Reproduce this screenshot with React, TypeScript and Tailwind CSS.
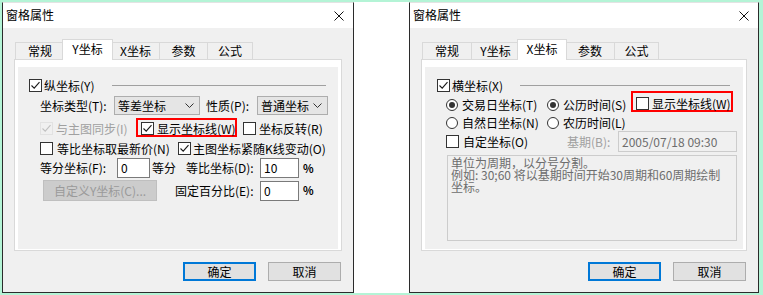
import React from 'react';

const font = { fontFamily: '"Noto Sans CJK SC", "Noto Sans", sans-serif' };

const CheckMark = ({ color = '#1a1a1a' }: { color?: string }) => (
  <svg width="11" height="11" viewBox="0 0 11 11" className="block">
    <path d="M1.5 5.5 L4.2 8.2 L9.5 2.2" fill="none" stroke={color} strokeWidth="1.1" />
  </svg>
);

const Check = ({ checked = false, disabled = false }: { checked?: boolean; disabled?: boolean }) => (
  <span
    className={`w-[13px] h-[13px] shrink-0 flex items-center justify-center border ${
      disabled ? 'border-[#e2e2e2] bg-[#f0f0f0]' : 'border-[#333] bg-white'
    }`}
  >
    {checked && <CheckMark color={disabled ? '#c0c0c0' : '#1a1a1a'} />}
  </span>
);

const Radio = ({ on = false }: { on?: boolean }) => (
  <span className="w-[12px] h-[12px] shrink-0 rounded-full border border-[#333] bg-white flex items-center justify-center">
    {on && <span className="w-[6px] h-[6px] rounded-full bg-[#333]" />}
  </span>
);

const Chevron = () => (
  <svg width="9" height="5" viewBox="0 0 9 5" className="block">
    <path d="M0.5 0.5 L4.5 4.5 L8.5 0.5" fill="none" stroke="#333" strokeWidth="1" />
  </svg>
);

const Select = ({ value, w }: { value: string; w: string }) => (
  <div className={`${w} h-[19px] border border-[#adadad] bg-[#e5e5e5] flex items-center justify-between pl-[3px] pr-[5px]`}>
    <span>{value}</span>
    <Chevron />
  </div>
);

const Input = ({ value, w, h = 'h-[20px]', disabled = false }: { value: string; w: string; h?: string; disabled?: boolean }) => (
  <div
    className={`${w} ${h} border flex items-center pl-[3px] ${
      disabled ? 'border-[#cccccc] bg-[#f0f0f0] text-[#6d6d6d]' : 'border-[#7a7a7a] bg-white'
    }`}
  >
    {value}
  </div>
);

const Btn = ({ label, primary = false }: { label: string; primary?: boolean }) => (
  <div
    className={`w-[73px] h-[19px] bg-[#e1e1e1] flex items-center justify-center ${
      primary ? 'border-2 border-[#0078d7]' : 'border border-[#adadad]'
    }`}
  >
    {label}
  </div>
);

const TitleBar = () => (
  <div className="h-[25px] bg-white flex items-center justify-between pl-[3px] pr-[9px]">
    <span className="text-[12px] -mt-[1px]">窗格属性</span>
    <svg width="10" height="10" viewBox="0 0 10 10" className="block">
      <path d="M0.5 0.5 L9.5 9.5 M9.5 0.5 L0.5 9.5" stroke="#111" strokeWidth="1" />
    </svg>
  </div>
);

const Tabs = ({ active, widths }: { active: number; widths: number[] }) => {
  const names = ['常规', 'Y坐标', 'X坐标', '参数', '公式'];
  const w = ['w-[49px]', 'w-[47px]', 'w-[48px]', 'w-[48px]', 'w-[46px]'];
  const wr = ['w-[49px]', 'w-[48px]', 'w-[46px]', 'w-[49px]', 'w-[45px]'];
  const wsel = ['w-[53px]', 'w-[51px]', 'w-[50px]', 'w-[53px]', 'w-[49px]'];
  const list = widths[0] === 0 ? w : wr;
  return (
    <div className="mt-[11px] h-[20px] pl-[12px] flex items-end">
      {names.map((n, i) =>
        i === active ? (
          <div
            key={n}
            className={`${wsel[i]} relative z-10 -mx-[2px] h-[21px] -mb-[1px] bg-white border-t border-x border-[#d9d9d9] flex items-center justify-center pb-[2px]`}
          >
            {n}
          </div>
        ) : (
          <div
            key={n}
            className={`${list[i]} h-[17px] bg-[#f0f0f0] border-t border-l border-[#d9d9d9] ${
              i === names.length - 1 ? 'border-r' : ''
            } flex items-center justify-center`}
          >
            {n}
          </div>
        )
      )}
    </div>
  );
};

const Dialog = ({ w, active, children }: { w: string; active: number; children: React.ReactNode }) => (
  <div className={`${w} h-[291px] border border-[#2b2b2b] border-t-[#e3e3e3] bg-[#f0f0f0] flex flex-col shrink-0`}>
    <TitleBar />
    <Tabs active={active} widths={active === 1 ? [0] : [1]} />
    <div className="mx-[11px] h-[192px] border border-[#d9d9d9] bg-white pt-[7px] px-[3px] pb-[1px] flex flex-col">
      <div className="flex-1 bg-[#f0f0f0] flex flex-col">{children}</div>
    </div>
    <div className="mt-[11px] flex justify-end pr-[12px] gap-[12px]">
      <Btn label="确定" primary />
      <Btn label="取消" />
    </div>
  </div>
);

const YAxis = () => (
  <>
    <div className="mt-[12px] h-[13px] pl-[11px] flex items-center">
      <Check checked />
      <span className="ml-[2px] w-[54px] whitespace-nowrap">纵坐标(Y)</span>
      <span className="ml-[14px] mr-[12px] flex-1 h-px bg-[#a0a0a0]" />
    </div>
    <div className="mt-[4px] h-[19px] pl-[22px] flex items-center">
      <span className="w-[74px]">坐标类型(T):</span>
      <Select value="等差坐标" w="w-[86px]" />
      <span className="ml-[6px] w-[51px]">性质(P):</span>
      <Select value="普通坐标" w="w-[71px]" />
    </div>
    <div className="mt-[3px] h-[19px] pl-[22px] flex items-end">
      <span className="mb-[2px] flex items-center">
        <Check checked disabled />
        <span className="ml-[3px] w-[77px] text-[#a0a0a0] whitespace-nowrap">与主图同步(I)</span>
      </span>
      <span className="ml-[3px] w-[101px] h-[19px] border-2 border-[#ff0000] pl-[3px] flex items-end">
        <span className="flex items-center">
          <Check checked />
          <span className="ml-[3px] whitespace-nowrap">显示坐标线(W)</span>
        </span>
      </span>
      <span className="ml-[6px] mb-[2px] flex items-center">
        <Check />
        <span className="ml-[3px] whitespace-nowrap">坐标反转(R)</span>
      </span>
    </div>
    <div className="mt-[5px] h-[13px] pl-[22px] flex items-center">
      <Check />
      <span className="ml-[4px] w-[121px] whitespace-nowrap">等比坐标取最新价(N)</span>
      <Check checked />
      <span className="ml-[2px] whitespace-nowrap">主图坐标紧随K线变动(O)</span>
    </div>
    <div className="mt-[3px] h-[20px] pl-[22px] flex items-center">
      <span className="w-[77px] whitespace-nowrap">等分坐标(F):</span>
      <Input value="0" w="w-[33px]" />
      <span className="ml-[2px] w-[34px]">等分</span>
      <span className="w-[74px] whitespace-nowrap">等比坐标(D):</span>
      <Input value="10" w="w-[39px]" />
      <span className="ml-[4px] text-[11px] font-bold">%</span>
    </div>
    <div className="mt-[2px] h-[21px] pl-[22px] flex items-center">
      <span className="ml-[3px] w-[114px] h-[21px] bg-[#cccccc] border border-[#bfbfbf] text-[#9a9a9a] flex items-center justify-center whitespace-nowrap">
        自定义Y坐标(C)...
      </span>
      <span className="ml-[18px] w-[85px] whitespace-nowrap">固定百分比(E):</span>
      <Input value="0" w="w-[39px]" h="h-[20px]" />
      <span className="ml-[4px] text-[11px] font-bold">%</span>
    </div>
  </>
);

const XAxis = () => (
  <>
    <div className="mt-[12px] h-[13px] pl-[12px] flex items-center">
      <Check checked />
      <span className="ml-[2px] w-[54px] whitespace-nowrap">横坐标(X)</span>
      <span className="ml-[14px] mr-[13px] flex-1 h-px bg-[#a0a0a0]" />
    </div>
    <div className="-mt-[1px] h-[21px] pl-[21px] flex items-end">
      <span className="mb-[1px] flex items-center">
        <Radio on />
        <span className="ml-[4px] w-[85px] whitespace-nowrap">交易日坐标(T)</span>
        <Radio on />
        <span className="ml-[4px] w-[66px] whitespace-nowrap">公历时间(S)</span>
      </span>
      <span className="ml-[2px] w-[102px] h-[21px] border-2 border-[#ff0000] pl-[3px] flex items-end">
        <span className="flex items-center">
          <Check />
          <span className="ml-[3px] whitespace-nowrap">显示坐标线(W)</span>
        </span>
      </span>
    </div>
    <div className="mt-[4px] h-[13px] pl-[21px] flex items-center">
      <Radio />
      <span className="ml-[4px] w-[85px] whitespace-nowrap">自然日坐标(N)</span>
      <Radio />
      <span className="ml-[4px] whitespace-nowrap">农历时间(L)</span>
    </div>
    <div className="mt-[2px] h-[21px] pl-[21px] flex items-center">
      <Check />
      <span className="ml-[4px] w-[104px] whitespace-nowrap">自定坐标(O)</span>
      <span className="w-[51px] text-[#a0a0a0] whitespace-nowrap">基期(B):</span>
      <Input value="2005/07/18 09:30" w="w-[119px]" h="h-[21px]" disabled />
    </div>
    <div className="mt-[3px] ml-[22px] w-[290px] h-[86px] border border-[#cccccc] bg-[#f0f0f0] text-[#6d6d6d] px-[3px] pt-[1px] leading-[12px]">
      <div>单位为周期，以分号分割。</div>
      <div>例如: 30;60 将以基期时间开始30周期和60周期绘制</div>
      <div>坐标。</div>
    </div>
  </>
);

export default function App() {
  return (
    <div style={font} className="w-[763px] h-[295px] bg-[#b4f4d6] py-[2px] flex text-[12px] leading-none text-black">
      <div className="w-[2px] shrink-0" />
      <Dialog w="w-[352px]" active={1}>
        <YAxis />
      </Dialog>
      <div className="w-[55px] shrink-0 bg-white" />
      <Dialog w="w-[350px]" active={2}>
        <XAxis />
      </Dialog>
    </div>
  );
}
